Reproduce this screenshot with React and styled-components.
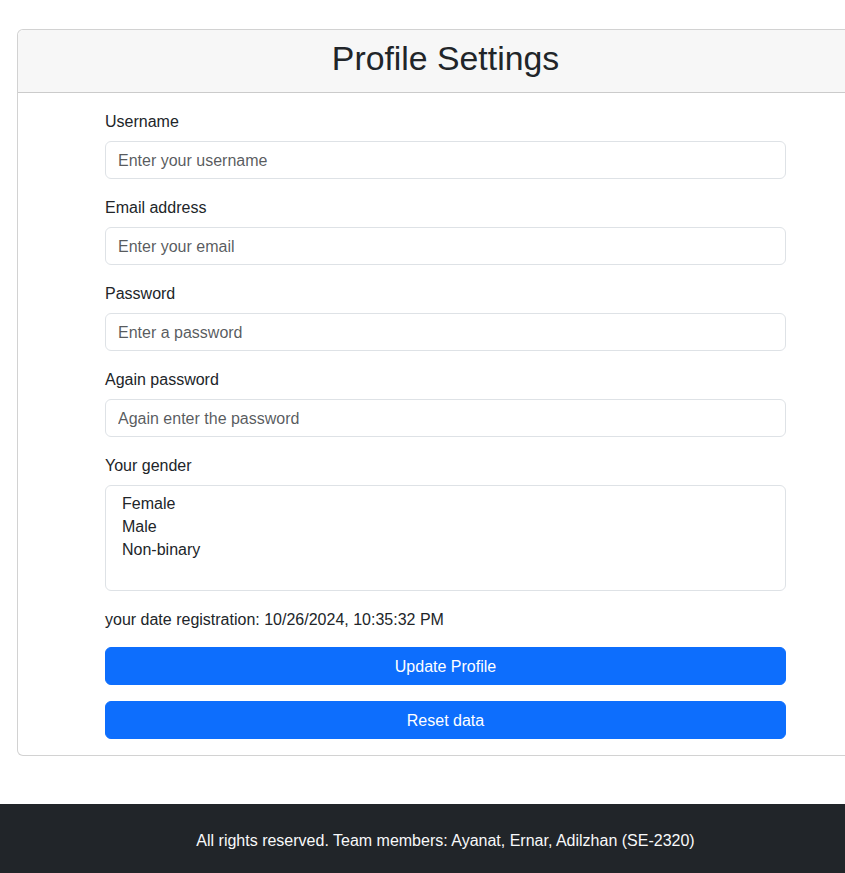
import React from 'react';
import styled, { createGlobalStyle } from 'styled-components';

const GlobalStyle = createGlobalStyle`
  html, body {
    margin: 0;
    overflow-x: hidden;
  }
  body {
    font-family: "Liberation Sans", Arial, sans-serif;
    font-size: 16px;
    line-height: 1.5;
    color: #212529;
    background: #fff;
  }
  * {
    box-sizing: border-box;
  }
`;

const Page = styled.div`
  display: flex;
  flex-direction: column;
  width: 891px;
  min-height: 873px;
`;

const Main = styled.main`
  padding: 29px 17px 48px;
`;

const Card = styled.section`
  width: 857px;
  border: 1px solid rgba(0, 0, 0, 0.175);
  border-radius: 6px;
  background: #fff;
`;

const CardHeader = styled.header`
  height: 63px;
  padding-bottom: 5px;
  display: flex;
  align-items: center;
  justify-content: center;
  background: #f7f7f7;
  border-bottom: 1px solid rgba(0, 0, 0, 0.175);
  border-radius: 6px 6px 0 0;
`;

const Title = styled.h1`
  margin: 0;
  font-size: 33.8px;
  font-weight: 400;
  line-height: 1.2;
`;

const Form = styled.form`
  width: 681px;
  margin: 0 auto;
  padding: 16px 0;
  display: flex;
  flex-direction: column;
`;

const Group = styled.div`
  margin-bottom: 16px;
`;

const Label = styled.label`
  display: block;
  margin-bottom: 8px;
  padding-top: 1px;
  height: 24px;
`;

const Input = styled.input`
  display: block;
  width: 100%;
  height: 38px;
  padding: 7px 12px 5px;
  font: inherit;
  color: #212529;
  border: 1px solid #dee2e6;
  border-radius: 6px;
  background: #fff;
  outline: none;

  &::placeholder {
    color: rgba(33, 37, 41, 0.75);
  }
`;

const Select = styled.select`
  display: block;
  width: 100%;
  height: 106px;
  padding: 9px 12px 6px;
  font: inherit;
  color: #212529;
  border: 1px solid #dee2e6;
  border-radius: 6px;
  background: #fff;
  outline: none;
  overflow: hidden;

  option {
    padding: 0 4px;
    line-height: 23px;
    height: 23px;
  }
`;

const DateLine = styled.p`
  margin: 0 0 16px;
  padding-top: 1px;
  height: 24px;
`;

const Button = styled.button`
  display: block;
  width: 100%;
  height: 38px;
  padding: 7px 12px 5px;
  font: inherit;
  color: #fff;
  background: #0d6efd;
  border: 1px solid #0d6efd;
  border-radius: 6px;
  cursor: pointer;
  margin-bottom: ${(p) => (p.$last ? '0' : '16px')};
`;

const Footer = styled.footer`
  margin-top: auto;
  background: #212529;
  color: #f8f9fa;
  text-align: center;
  padding: 25px 0 20px;
`;

const fields = [
  { id: 'username', label: 'Username', type: 'text', placeholder: 'Enter your username' },
  { id: 'email', label: 'Email address', type: 'email', placeholder: 'Enter your email' },
  { id: 'password', label: 'Password', type: 'password', placeholder: 'Enter a password' },
  { id: 'password2', label: 'Again password', type: 'password', placeholder: 'Again enter the password' },
];

export default function App() {
  return (
    <Page>
      <GlobalStyle />
      <Main>
        <Card>
          <CardHeader>
            <Title>Profile Settings</Title>
          </CardHeader>
          <Form onSubmit={(e) => e.preventDefault()}>
            {fields.map((f) => (
              <Group key={f.id}>
                <Label htmlFor={f.id}>{f.label}</Label>
                <Input id={f.id} type={f.type} placeholder={f.placeholder} />
              </Group>
            ))}
            <Group>
              <Label htmlFor="gender">Your gender</Label>
              <Select id="gender" multiple>
                <option>Female</option>
                <option>Male</option>
                <option>Non-binary</option>
              </Select>
            </Group>
            <DateLine>your date registration: 10/26/2024, 10:35:32 PM</DateLine>
            <Button type="submit">Update Profile</Button>
            <Button type="button" $last>Reset data</Button>
          </Form>
        </Card>
      </Main>
      <Footer>All rights reserved. Team members: Ayanat, Ernar, Adilzhan (SE-2320)</Footer>
    </Page>
  );
}
